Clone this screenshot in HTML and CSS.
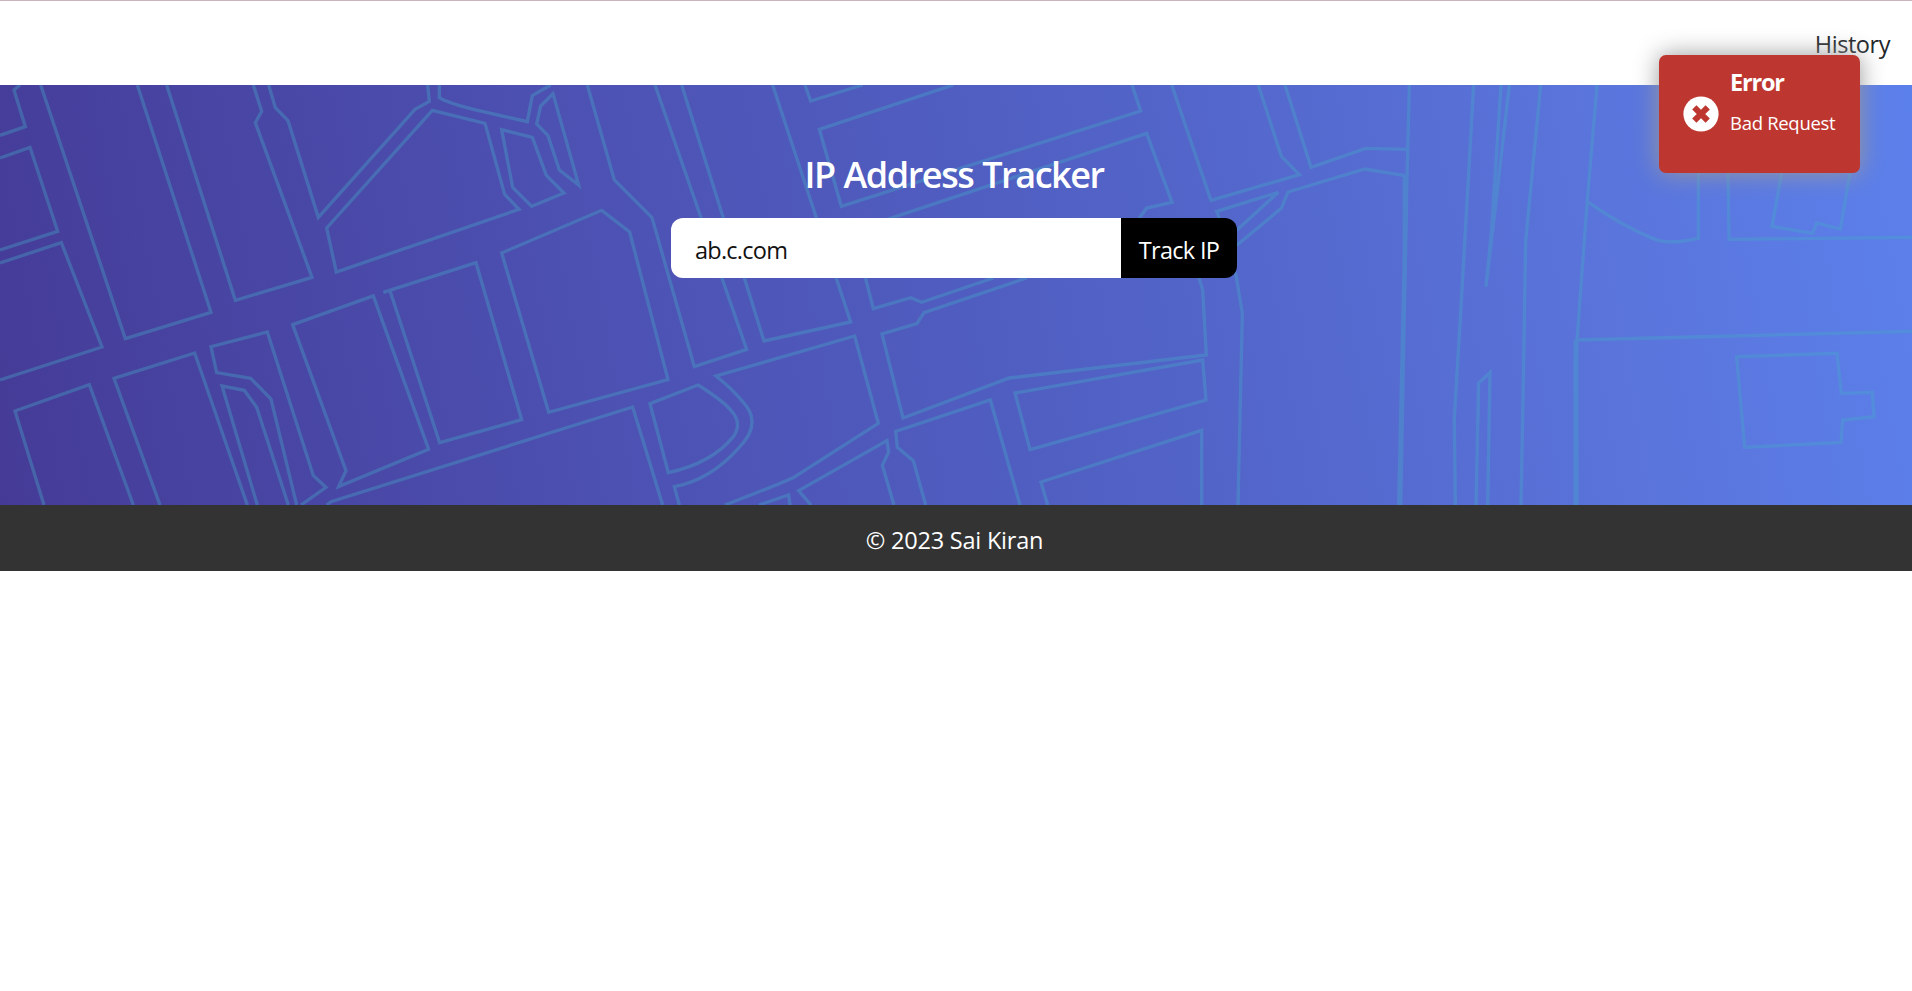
FILE: index.html
```html
<!DOCTYPE html>
<html lang="en">
<head>
<meta charset="utf-8">
<title>IP Address Tracker</title>
<link rel="stylesheet" href="styles.css">
</head>
<body>
<header class="navbar"><a class="nav-link">History</a></header>
<main class="hero">
  <svg class="streets" width="1912" height="420" viewBox="0 0 1912 420" aria-hidden="true">
    <g class="lines">
      <g transform="translate(0 -5) scale(.33333)">
        <path d="M60 15L42 30L76 140L0 166M0 234L90 202L173 454L0 510M0 549L184 488L306 801L0 900M122 15L376 776L633 697L412 15M500 15L706 661L936 592L766 128L785 94L760 15M806 15L826 83L864 122L955 412L1245 88L1288 64L1283 15"/>
        <path d="M132 1275L45 993L268 914L400 1275M480 1275L342 895L584 819L742 1275M772 1275L666 918L733 931L770 982L865 1275M890 1275L813 957L752 895L650 878L633 800L802 756L940 1187L978 1222L903 1275"/>
      </g>
      <g transform="translate(300 -5) scale(.33333)">
        <path d="M80 444L397 91L555 130L614 343L657 388L109 576ZM418 15V53Q440 68 520 88L682 125L697 47L752 15M605 149L697 172L739 286L792 339L695 379L638 322ZM722 78L759 41L836 315L778 270L744 167L710 132Z"/>
        <path d="M-22 734L220 648L386 1108L116 1220L138 1172ZM250 637L528 548L665 1019L419 1088L270 632M605 519L905 391L989 456L1104 899L746 997ZM862 15L943 300L1056 413L1183 860L1340 808L1065 15M80 1275L93 1265L998 981L1088 1275"/>
      </g>
      <g transform="translate(640 -5) scale(.33333)">
        <path d="M125 15L250 414L313 594L372 783L632 726L398 15M495 15L512 63L668 15M940 15L538 148L604 379L1502 93L1476 15"/>
        <path d="M1498 414L1520 384L1596 367L1520 160L640 452L700 686L812 653L845 667L1060 594M1160 594L852 698L831 731L726 762L789 1014L1108 894L1699 825L1688 630L1677 594"/>
        <path d="M118 1275L103 1220Q210 1200 295 1105Q370 1030 308 965Q275 925 228 888L644 768L715 1030L465 1190Q420 1212 255 1275M30 971L174 915Q255 965 280 1000Q305 1035 280 1070Q215 1150 85 1178Z"/>
        <path d="M357 1275L446 1245L450 1275M513 1275L476 1232L741 1082L746 1117L727 1156L762 1275M857 1275L820 1142L772 1102L767 1054L1051 960L1140 1275"/>
      </g>
      <g transform="translate(980 -5) scale(.33333)">
        <path d="M105 939L668 840L678 960L150 1109ZM203 1275L183 1206L665 1051V1275M575 15L693 361L958 284L904 229L835 15M915 15L993 262L1157 205L1280 208M1275 287L1155 267L924 336L904 385L771 495L740 520L768 585L787 700L774 1275M771 450L895 337L710 394L718 414"/>
      </g>
      <g transform="translate(1320 -5) scale(.33333)">
        <path d="M268 15L261 300L242 1275M253 287L253 520L236 1275M461 15L430 560L403 1015L406 1275M543 15L515 450L498 620L524 400L568 15M662 15L617 485L610 900L603 1275M831 15L802 360L771 780M468 1275L476 909L510 878L503 1275"/>
      </g>
      <g transform="translate(1580 -5) scale(.33333)">
        <path class="wide" d="M-12 1275V780"/>
        <path d="M-14 780L996 754M25 367Q130 440 225 478Q260 495 355 475V15M440 15L447 478L996 472M640 100L605 279L576 439L698 460L710 429L781 447L810 279L835 130M470 830L771 820L784 940L877 937L882 1010L788 1020L783 1087L494 1102Z"/>
      </g>
    </g>
  </svg>
  <h1 class="title">IP Address Tracker</h1>
  <form class="search">
    <input class="search-input" type="text" value="ab.c.com" aria-label="IP address or domain">
    <button class="search-button" type="button">Track IP</button>
  </form>
</main>
<footer class="footer"><span class="footer-text">© 2023 Sai Kiran</span></footer>
<div class="toast" role="alert">
  <svg class="toast-icon" width="36" height="36" viewBox="0 0 36 36" aria-hidden="true">
    <circle cx="18" cy="18" r="17.6" fill="#fff"/>
    <path d="M11.3 11.3L24.7 24.7M24.7 11.3L11.3 24.7" stroke="#bd362f" stroke-width="6"/>
  </svg>
  <div class="toast-body">
    <strong class="toast-title">Error</strong>
    <span class="toast-message">Bad Request</span>
  </div>
</div>
</body>
</html>
```
FILE: styles.css
```css
* { box-sizing: border-box; }
body {
  margin: 0;
  background: #fff;
  color: #212529;
  font-family: "Open Sans", "Noto Sans", sans-serif;
  font-size: 23.5px;
}
.navbar {
  height: 85px;
  border-top: 1px solid #cbb4bd;
  display: flex;
  justify-content: flex-end;
  align-items: center;
  padding: 2px 22px 0 0;
}
.nav-link { font-size: 23.5px; letter-spacing: -.45px; }
.hero {
  position: relative;
  height: 420px;
  display: flex;
  flex-direction: column;
  align-items: center;
  padding-right: 4px;
  overflow: hidden;
  background: linear-gradient(80deg, #453b97 0%, #4c50b1 30%, #5263c7 60%, #5a75dc 84%, #5c80eb 100%);
}
.streets { position: absolute; left: 0; top: 0; }
.lines { fill: none; stroke: #45a8c8; stroke-width: 10; opacity: .37; }
.wide { stroke-width: 15; }
.title {
  position: relative;
  margin: 65px 0 0;
  color: #fff;
  font-size: 36px;
  line-height: 50px;
  font-weight: 650;
  letter-spacing: -1.45px;
  word-spacing: 1px;
  white-space: nowrap;
}
.search {
  position: relative;
  display: flex;
  width: 566px;
  height: 60px;
  margin-top: 18px;
  border-radius: 12px;
  overflow: hidden;
}
.search-input {
  width: 450px;
  border: 0;
  padding: 4px 24px 0;
  background: #fff;
  color: #111;
  font: 23.5px "Open Sans", sans-serif;
  letter-spacing: -.75px;
}
.search-button {
  width: 116px;
  border: 0;
  padding: 4px 0 0;
  background: #000;
  color: #fff;
  font: 23.5px "Open Sans", sans-serif;
  letter-spacing: -.7px;
}
.footer {
  height: 66px;
  display: flex;
  align-items: center;
  justify-content: center;
  padding-top: 3px;
  padding-right: 3px;
  background: #333;
  color: #fff;
}
.footer-text { letter-spacing: -.22px; }
.toast {
  position: absolute;
  left: 1659px;
  top: 55px;
  width: 201px;
  height: 118px;
  display: flex;
  padding: 0 0 0 24px;
  border-radius: 7px;
  background: #bd362f;
  color: #fff;
  box-shadow: 0 0 24px #999;
}
.toast-icon { margin-top: 41px; flex: none; }
.toast-body {
  display: flex;
  flex-direction: column;
  padding: 12px 0 0 11px;
  white-space: nowrap;
}
.toast-title { font-size: 23.5px; line-height: 30px; font-weight: 700; letter-spacing: -1.2px; }
.toast-message { margin-top: 14px; font-size: 18.5px; line-height: 24px; letter-spacing: -.3px; }
```
